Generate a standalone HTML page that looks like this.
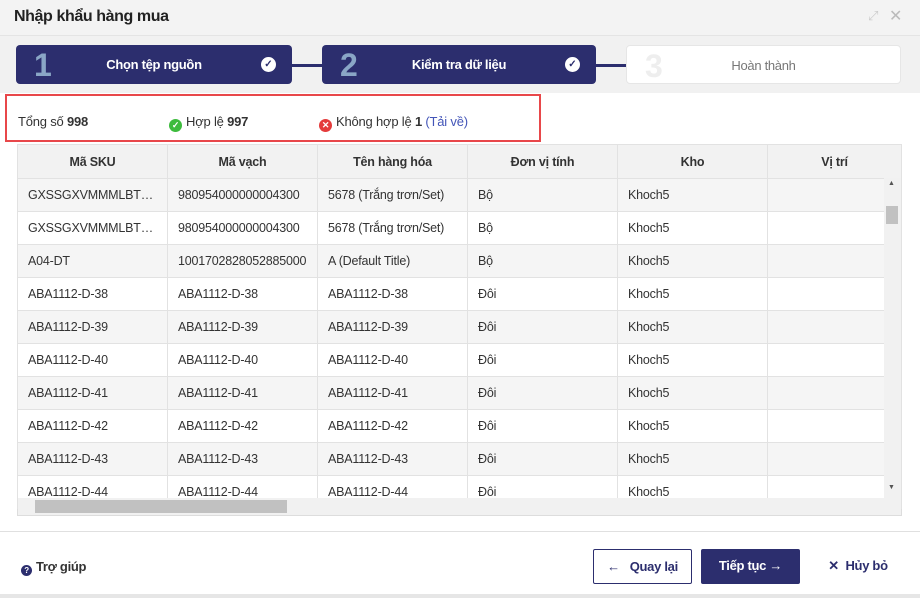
<!DOCTYPE html>
<html><head><meta charset="utf-8"><style>
*{box-sizing:border-box;margin:0;padding:0}
body{width:920px;height:598px;overflow:hidden;font-family:"Liberation Sans",Arial,sans-serif;background:#fff;position:relative;color:#333}
.hdr{position:absolute;left:0;top:0;width:920px;height:36px;background:#f3f3f3;border-bottom:1px solid #e4e4e4}
.hdr h1{position:absolute;left:14px;top:8px;font-size:16px;font-weight:bold;color:#222;letter-spacing:-.4px}
.steps{position:absolute;left:0;top:36px;width:920px;height:57px;background:#f1f1f1}
.st{position:absolute;top:9px;height:39px;border-radius:4px;background:#2c2e6e;color:#fff}
.st .n{position:absolute;left:18px;top:2px;font-size:32px;font-weight:bold;color:#8aa6c6}
.st .t{position:absolute;left:0;right:0;top:12px;text-align:center;font-size:13px;font-weight:bold;letter-spacing:-.3px}
.st .c{position:absolute;right:16px;top:12px;width:15px;height:15px;border-radius:50%;background:#fff;color:#2c2e6e;font-size:10px;text-align:center;line-height:15px;font-weight:bold}
.ln{position:absolute;top:28px;height:3px;background:#2c2e6e}
.sum{position:absolute;left:5px;top:94px;width:536px;height:48px;border:2px solid #e8474a;font-size:13px;letter-spacing:-.2px}
.sum span{position:absolute;top:18px}
.ic{display:inline-block;width:13px;height:13px;border-radius:50%;color:#fff;font-size:9px;text-align:center;line-height:13px;vertical-align:-2px;margin-right:4px;font-weight:bold;font-style:normal}
table{position:absolute;left:17px;top:144px;width:884px;border-collapse:collapse;font-size:12.5px;table-layout:fixed;letter-spacing:-.2px}
td,th{height:33px;border:1px solid #e2e2e2;padding:0 10px;white-space:nowrap;overflow:hidden;text-overflow:ellipsis;text-align:left;font-weight:normal}
th{background:#f2f2f2;text-align:center;font-weight:bold;height:34px}
tr:nth-child(even) td{background:#f5f5f5}
.wrap{position:absolute;left:17px;top:144px;width:885px;height:372px;border:1px solid #ddd;overflow:hidden}
.foot{position:absolute;left:0;top:531px;width:920px;border-top:1px solid #e0e0e0;height:63px}
.btn{position:absolute;top:17px;height:35px;border-radius:2px;font-size:13px;font-weight:bold;line-height:33px;text-align:center;letter-spacing:-.3px}
</style></head><body>
<div class="hdr"><h1>Nhập khẩu hàng mua</h1>
<span style="position:absolute;left:868px;top:8px;color:#ccc;font-size:13px">⤢</span>
<span style="position:absolute;left:889px;top:6px;color:#bbb;font-size:16px">✕</span></div>
<div class="steps">
<div class="st" style="left:16px;width:276px"><span class="n">1</span><div class="t">Chọn tệp nguồn</div><span class="c">✓</span></div>
<div class="ln" style="left:292px;width:30px"></div>
<div class="st" style="left:322px;width:274px"><span class="n">2</span><div class="t">Kiểm tra dữ liệu</div><span class="c">✓</span></div>
<div class="ln" style="left:596px;width:30px"></div>
<div class="st" style="left:626px;width:275px;background:#fff;border:1px solid #e6e6e6"><span class="n" style="color:#eee">3</span><div class="t" style="color:#777;font-weight:normal">Hoàn thành</div></div>
</div>
<div class="sum">
<span style="left:11px">Tổng số <b>998</b></span>
<span style="left:162px"><i class="ic" style="background:#3dbb3d">✓</i>Hợp lệ <b>997</b></span>
<span style="left:312px"><i class="ic" style="background:#e43b3b">✕</i>Không hợp lệ <b>1</b> <span style="position:static;color:#4355b8">(Tải về)</span></span>
</div>
<div class="wrap"></div>
<table>
<colgroup><col style="width:150px"><col style="width:150px"><col style="width:150px"><col style="width:150px"><col style="width:150px"><col style="width:134px"></colgroup>
<tr><th>Mã SKU</th><th>Mã vạch</th><th>Tên hàng hóa</th><th>Đơn vị tính</th><th>Kho</th><th>Vị trí</th></tr>
<tr><td>GXSSGXVMMMLBT0000</td><td>980954000000004300</td><td>5678 (Trắng trơn/Set)</td><td>Bộ</td><td>Khoch5</td><td></td></tr>
<tr><td>GXSSGXVMMMLBT0000</td><td>980954000000004300</td><td>5678 (Trắng trơn/Set)</td><td>Bộ</td><td>Khoch5</td><td></td></tr>
<tr><td>A04-DT</td><td>1001702828052885000</td><td>A (Default Title)</td><td>Bộ</td><td>Khoch5</td><td></td></tr>
<tr><td>ABA1112-D-38</td><td>ABA1112-D-38</td><td>ABA1112-D-38</td><td>Đôi</td><td>Khoch5</td><td></td></tr>
<tr><td>ABA1112-D-39</td><td>ABA1112-D-39</td><td>ABA1112-D-39</td><td>Đôi</td><td>Khoch5</td><td></td></tr>
<tr><td>ABA1112-D-40</td><td>ABA1112-D-40</td><td>ABA1112-D-40</td><td>Đôi</td><td>Khoch5</td><td></td></tr>
<tr><td>ABA1112-D-41</td><td>ABA1112-D-41</td><td>ABA1112-D-41</td><td>Đôi</td><td>Khoch5</td><td></td></tr>
<tr><td>ABA1112-D-42</td><td>ABA1112-D-42</td><td>ABA1112-D-42</td><td>Đôi</td><td>Khoch5</td><td></td></tr>
<tr><td>ABA1112-D-43</td><td>ABA1112-D-43</td><td>ABA1112-D-43</td><td>Đôi</td><td>Khoch5</td><td></td></tr>
<tr><td>ABA1112-D-44</td><td>ABA1112-D-44</td><td>ABA1112-D-44</td><td>Đôi</td><td>Khoch5</td><td></td></tr>
</table>
<div style="position:absolute;left:884px;top:178px;width:17px;height:320px;background:#f1f1f1"></div>
<div style="position:absolute;left:886px;top:206px;width:12px;height:18px;background:#c1c1c1"></div>
<div style="position:absolute;left:888px;top:180px;font-size:7px;color:#555">▲</div>
<div style="position:absolute;left:888px;top:484px;font-size:7px;color:#555">▼</div>
<div style="position:absolute;left:18px;top:498px;width:866px;height:17px;background:#f1f1f1"></div>
<div style="position:absolute;left:35px;top:500px;width:252px;height:13px;background:#c1c1c1"></div>
<div style="position:absolute;left:884px;top:498px;width:17px;height:17px;background:#f1f1f1"></div>
<div style="position:absolute;left:0;top:516px;width:920px;height:15px;background:#fff"></div>
<div class="foot">
<span style="position:absolute;left:21px;top:27px;font-size:13px;font-weight:bold;color:#333;letter-spacing:-.3px"><i class="ic" style="background:#2c2e6e;width:11px;height:11px;line-height:11px;font-size:8px">?</i>Trợ giúp</span>
<div class="btn" style="left:593px;width:99px;border:1px solid #2c2e6e;color:#2c2e6e;background:#fff">←&nbsp;&nbsp; Quay lại</div>
<div class="btn" style="left:701px;width:99px;background:#2c2e6e;color:#fff">Tiếp tục →</div>
<div class="btn" style="left:818px;width:80px;color:#2c2e6e;font-size:13px">✕&nbsp; Hủy bỏ</div>
</div>
<div style="position:absolute;left:0;top:594px;width:920px;height:4px;background:#e6e6e6"></div>
</body></html>
